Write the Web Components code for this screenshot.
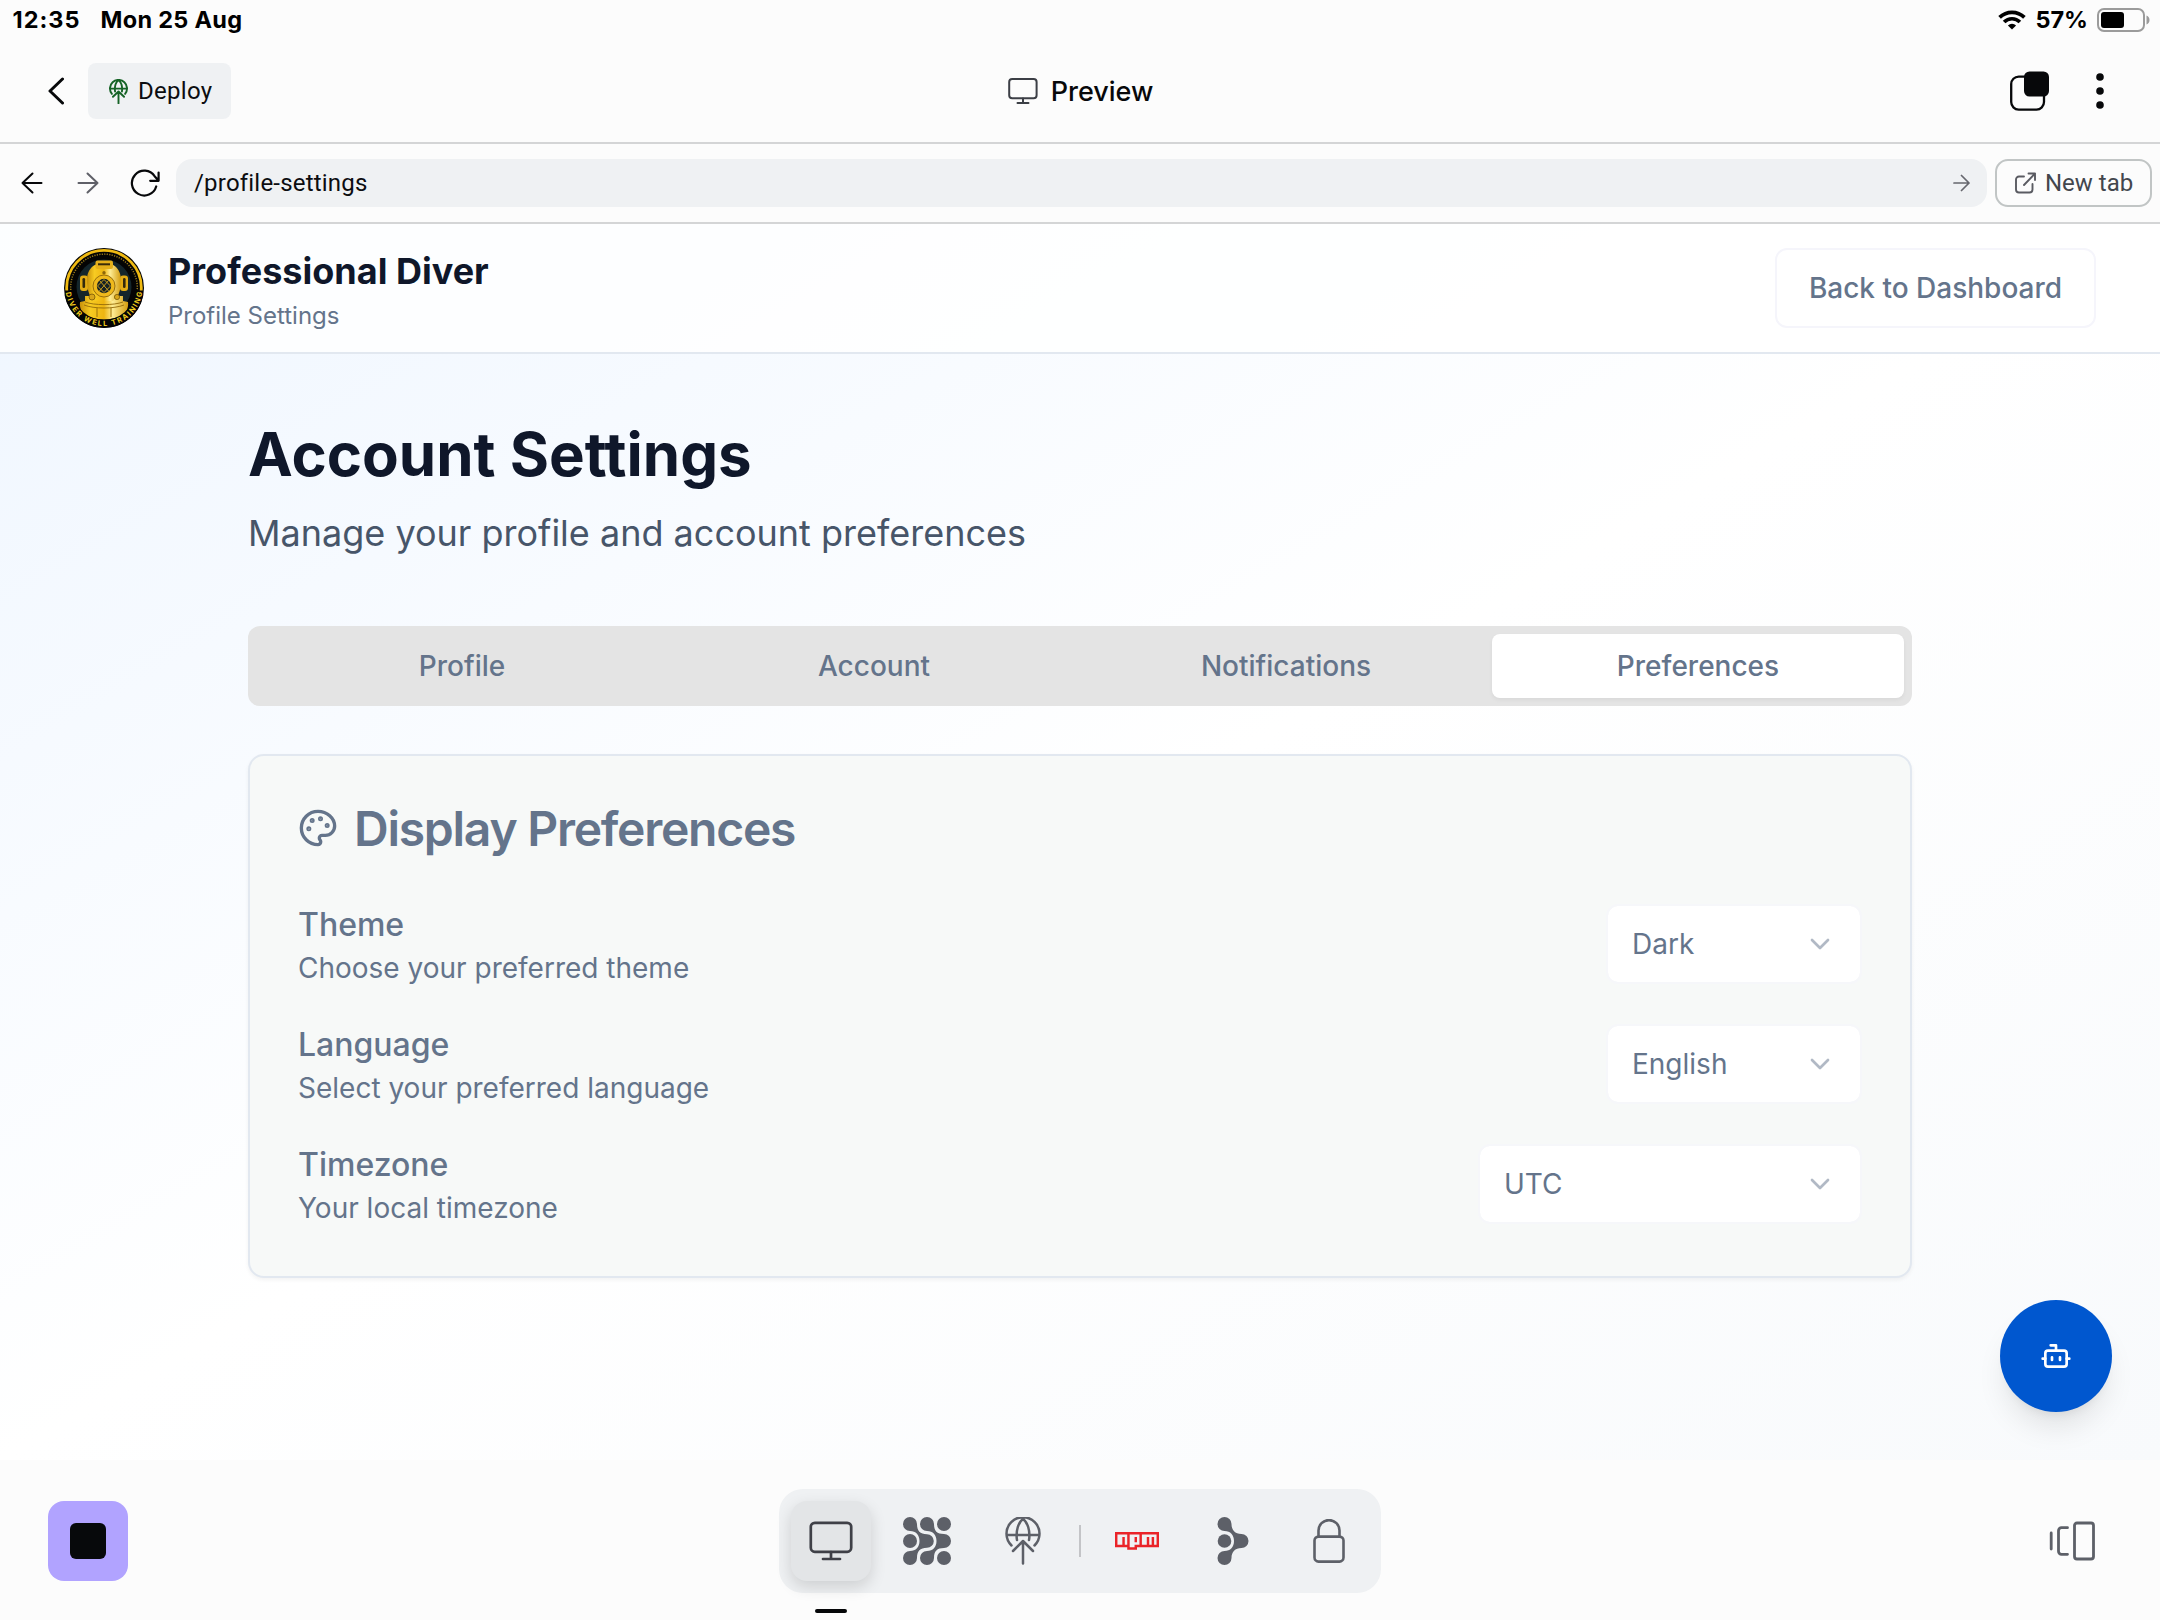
<!DOCTYPE html>
<html lang="en">
<head>
<meta charset="utf-8">
<title>Preview</title>
<style>
html,body{margin:0;height:100%;background:#fcfcfc}
body{font-family:Inter,"Liberation Sans",sans-serif;color:#050608;overflow:hidden}
</style>
</head>
<body>
<preview-shell>
  <status-bar slot="status" time="12:35" date="Mon 25 Aug" battery="57%"></status-bar>
  <workspace-header slot="header" action="Deploy">Preview</workspace-header>
  <browser-bar slot="nav" path="/profile-settings"></browser-bar>
  <profile-app slot="app"></profile-app>
  <tool-dock slot="dock"></tool-dock>
</preview-shell>
<script>
const define = (name, html) => customElements.define(name, class extends HTMLElement {
  constructor() {
    super();
    const t = document.createElement('template');
    t.innerHTML = (typeof html === 'function' ? html(this) : html).replace(/^\s*/, '<style>*{box-sizing:border-box}svg{display:block;flex:none}</style>');
    this.attachShadow({ mode: 'open' }).append(t.content.cloneNode(true));
  }
});
const PLEX = 'Roboto,"Noto Sans",sans-serif';

define('preview-shell', `
<style>:host{display:grid;grid-template-rows:40px 104px 80px 1236px 160px;width:2160px;height:1620px;background:#fcfcfc}</style>
<slot name="status"></slot><slot name="header"></slot><slot name="nav"></slot><slot name="app"></slot><slot name="dock"></slot>`);

define('status-bar', el => `
<style>
:host{display:flex;align-items:center;justify-content:space-between;padding:0 10px 0 12.5px;font-weight:700;font-size:23.5px;line-height:28px;color:#000}
div{display:flex;align-items:center}
.l{gap:20px}.t{letter-spacing:1px}.d{letter-spacing:.3px}
.r{gap:9px}.p{margin-right:-1px}
</style>
<div class="l"><span class="t">${el.getAttribute('time')}</span><span class="d">${el.getAttribute('date')}</span></div>
<div class="r">
<svg width="28" height="20" viewBox="0 0 28 20" fill="none" stroke="#000" stroke-width="3.7"><path d="M1.6 7.4a17.6 17.6 0 0 1 24.8 0"/><path d="M6.1 12a11.2 11.2 0 0 1 15.8 0"/><path d="M14 19.6l-4.1-4.2a5.9 5.9 0 0 1 8.2 0z" fill="#000" stroke="none"/></svg>
<span class="p">${el.getAttribute('battery')}</span>
<svg width="54" height="24" viewBox="0 0 54 24"><rect x="2" y="1" width="46" height="22" rx="6" fill="none" stroke="#9b9b9b" stroke-width="2"/><rect x="5" y="4" width="23" height="16" rx="3" fill="#000"/><path d="M50.500 7.500c4 1.500 4 7.500 0 9z" fill="#9b9b9b"/></svg>
</div>`);

define('workspace-header', el => `
<style>
:host{display:grid;grid-template-columns:1fr auto 1fr;align-items:center;border-bottom:2px solid #d4d5d6;padding:0 48px}
div{display:flex;align-items:center}
.back{margin-right:24px}
.deploy{height:56px;width:143px;padding-left:21px;gap:10px;background:#eff1f3;border-radius:8px;font:400 24px/32px ${PLEX};letter-spacing:.3px;color:#0c0d10}
.title{gap:13px;font-weight:500;font-size:27px;line-height:36px;color:#07080a;padding:1px 0 0 1px}
.title svg{margin-top:-1px}
.r{justify-content:flex-end}
.more{margin-left:47px;margin-right:8px}
</style>
<div>
<svg class="back" width="16" height="28" viewBox="0 0 16 28" fill="none" stroke="#07080a" stroke-width="3" stroke-linecap="round" stroke-linejoin="round"><path d="M14.500 2 2 14l12.500 12"/></svg>
<div class="deploy"><svg width="19" height="25" viewBox="0 0 36 47" fill="none" stroke="#166326" stroke-width="3.600" stroke-linecap="round" stroke-linejoin="round"><path d="M5.500 28A16.200 16.200 0 1 1 30.500 28M2 18h32M11.500 23.500C10 14 13 5 18 2c5 3 8 12 6.500 21.500M18 46V24M7.500 33.500 18 23.500l10.500 10"/></svg><span>${el.getAttribute('action')}</span></div>
</div>
<div class="title"><svg width="30" height="26" viewBox="0 0 30 26" fill="none" stroke="#3c3f46" stroke-width="2" stroke-linecap="round"><rect x="1.200" y="1" width="27.400" height="19.200" rx="3"/><path d="M15 20.500V25M9.500 25h11"/></svg><slot></slot></div>
<div class="r">
<svg width="40" height="40" viewBox="0 0 40 40"><rect x="2.200" y="5.600" width="32.800" height="33" rx="7.500" fill="none" stroke="#07080a" stroke-width="2.300"/><rect x="15" y=".5" width="25" height="25" rx="5.500" fill="#07080a"/></svg>
<svg class="more" width="8" height="36" viewBox="0 0 8 36" fill="#07080a"><circle cx="4" cy="4" r="3.800"/><circle cx="4" cy="18" r="3.800"/><circle cx="4" cy="32" r="3.800"/></svg>
</div>`);

define('browser-bar', el => `
<style>
:host{display:flex;align-items:center;border-bottom:2px solid #d4d5d6;padding:0 8px 0 21px;font:400 24px/32px ${PLEX}}
.f{margin-left:34px}.re{margin-left:31px;margin-right:16px}
.url{flex:1;height:48px;background:#eff1f3;border-radius:16px;display:flex;align-items:center;justify-content:space-between;padding:0 17px 0 18px;color:#0c0d10;margin-right:8px;letter-spacing:.2px}
.new{height:48px;width:157px;border:2px solid #c1c5c5;border-radius:13px;display:flex;align-items:center;padding-left:18px;gap:9px;color:#43464d;white-space:nowrap}
</style>
<svg width="22" height="22" viewBox="0 0 22 22" fill="none" stroke="#07080a" stroke-width="2" stroke-linecap="round" stroke-linejoin="round"><path d="M20.500 11H1.500M11.500 1.500 1.500 11l10 9.500"/></svg>
<svg class="f" width="22" height="22" viewBox="0 0 22 22" fill="none" stroke="#5f6068" stroke-width="2" stroke-linecap="round" stroke-linejoin="round"><path d="M1.500 11h19M10.500 1.500l10 9.500-10 9.500"/></svg>
<svg class="re" width="30" height="28" viewBox="0 0 30 28" fill="none" stroke="#07080a" stroke-width="2.200" stroke-linecap="round" stroke-linejoin="round"><path d="M26.200 17.500A12.400 12.400 0 1 1 24.600 7.200L28 11M28.600 3.500v8.300h-8.400"/></svg>
<div class="url"><span>${el.getAttribute('path')}</span><svg width="17" height="18" viewBox="0 0 17 18" fill="none" stroke="#66676e" stroke-width="1.700" stroke-linecap="round" stroke-linejoin="round"><path d="M1 9h15M8.500 1.500 16 9l-7.500 7.500"/></svg></div>
<div class="new"><svg width="21" height="22" viewBox="0 0 21 22" fill="none" stroke="#5a5b62" stroke-width="1.900" stroke-linecap="round" stroke-linejoin="round"><path d="M9 4.500H4a3 3 0 0 0-3 3V17.500a3 3 0 0 0 3 3h10.500a3 3 0 0 0 3-3V12M13.500 1.500h6.500V8M20 1.500 9 13"/></svg><span>New tab</span></div>`);

define('brand-logo', `
<style>:host{display:block;width:80px;height:80px}</style>
<svg width="80" height="80" viewBox="0 0 80 80">
<defs><linearGradient id="g" x1="0" x2="1"><stop offset="0" stop-color="#c8910b"/><stop offset=".22" stop-color="#f7cb22"/><stop offset=".5" stop-color="#eeb511"/><stop offset=".68" stop-color="#fdec94"/><stop offset="1" stop-color="#d49c0d"/></linearGradient></defs>
<circle cx="40" cy="40" r="40" fill="#040404"/>
<path d="M2.800 42.500A37.300 37.300 0 1 1 77.200 42.500" fill="none" stroke="#f0ba12" stroke-width="2.800"/>
<path d="M6.800 42A33.300 33.300 0 1 1 73.200 42" fill="none" stroke="#9b7a1a" stroke-width="1.500" stroke-dasharray="1.200 1.300"/>
<circle cx="40" cy="39" r="27.500" fill="#14252b"/>
<rect x="16" y="27.500" width="8" height="15.500" rx="3" fill="#e3ab14"/><rect x="56" y="27.500" width="8" height="15.500" rx="3" fill="#e3ab14"/>
<rect x="18.500" y="30" width="2.600" height="10" rx="1.300" fill="#33290c"/><rect x="59" y="30" width="2.600" height="10" rx="1.300" fill="#33290c"/>
<path d="M23.500 38C21 23 28 15 40 15s19 8 16.500 23c-.5 7-3.500 12-6.500 15H30c-3-3-6-8-6.500-15z" fill="url(#g)"/>
<rect x="31.500" y="12.500" width="17.500" height="8.500" rx="2" fill="#e5b01a"/><path d="M34 16.300h12" stroke="#3a2c08" stroke-width="2"/>
<path d="M21 48h6l4 5h18l4-5h6v5l5 1c1 7-3 12-7 14-10 4.500-24 4.500-34 0-4-2-8-7-7-14l5-1z" fill="url(#g)"/>
<path d="M21 54c9 3.500 29 3.500 38 0M20 57c10 4 30 4 40 0M33 60v9M47 60v9" fill="none" stroke="#946b0a" stroke-width=".9"/>
<circle cx="40" cy="38" r="11" fill="#efb91c" stroke="#8d670b" stroke-width=".9"/><circle cx="40" cy="38" r="7.200" fill="#142125"/>
<path d="M35.500 32.500l9.500 11M44.500 32.500l-9.500 11M40 31.500l6.500 6.500-6.500 6.500-6.500-6.500z" fill="none" stroke="#d9a81e" stroke-width=".9"/>
<circle cx="40" cy="24.800" r="1.700" fill="#8d670b"/><circle cx="28" cy="49" r="3" fill="#d8a51a" stroke="#7a5908" stroke-width=".8"/><circle cx="53" cy="49" r="2.600" fill="#d8a51a" stroke="#7a5908" stroke-width=".8"/>
<path d="M4.700 46A35.800 35.800 0 0 0 75.300 46" fill="none" stroke="#040404" stroke-width="8"/>
<path id="arc" d="M1.800 43.500A38.400 38.400 0 0 0 78.200 43.500" fill="none"/>
<text font-family="Inter,sans-serif" font-weight="700" font-size="7.200" fill="#f5cf1c"><textPath href="#arc" startOffset="1" textLength="111">DIVER WELL TRAINING</textPath></text>
</svg>`);

define('app-header', `
<style>
:host{display:flex;align-items:center;height:130px;border-bottom:2px solid #e2e8f0;background:rgba(255,255,255,.82);padding:0 64px}
.t{margin-left:24px;flex:1;padding-top:8px}
h1{margin:-1px 0 1px;font-weight:700;font-size:36px;line-height:48px;color:#0f172a}
p{margin:0;font-size:24px;line-height:40px;color:#64748b}
.b{height:80px;width:321px;border:2px solid #f5f5fb;border-radius:12px;background:#fff;display:grid;place-items:center;font-weight:500;font-size:28px;color:#64748b}
</style>
<brand-logo></brand-logo>
<div class="t"><h1>Professional Diver</h1><p>Profile Settings</p></div>
<div class="b"><span>Back to Dashboard</span></div>`);

define('tab-item', `
<style>:host{display:grid;place-items:center;flex:1;height:64px;border-radius:8px;font-weight:500;font-size:28px;line-height:40px;color:#64748b}
:host([active]){background:#fff;box-shadow:0 2px 4px rgba(0,0,0,.05)}</style><slot></slot>`);

define('select-box', `
<style>:host{display:flex;align-items:center;justify-content:space-between;width:256px;height:80px;padding:0 24px;border:2px solid #f6f7fa;border-radius:12px;background:#fff;background-clip:padding-box;font-size:28px;line-height:40px;color:#64748b}
:host([wide]){width:384px}</style><span><slot></slot></span>
<svg width="32" height="32" viewBox="0 0 24 24" fill="none" stroke="#64748b" stroke-opacity=".5" stroke-width="2" stroke-linecap="round" stroke-linejoin="round"><path d="m6 9 6 6 6-6"/></svg>`);

define('pref-row', el => `
<style>:host{display:flex;align-items:center;justify-content:space-between;height:88px;color:#64748b}
.l{font-weight:500;font-size:32px;line-height:48px;padding-top:1px;height:48px}.d{font-size:28px;line-height:40px}</style>
<div><div class="l">${el.getAttribute('label')}</div><div class="d">${el.getAttribute('hint')}</div></div><slot></slot>`);

define('profile-app', `
<style>
:host{display:block;height:1236px;overflow:hidden;position:relative;background:linear-gradient(to bottom right,#eff6ff,#ffffff 50%,#f8fafc)}
main{width:1664px;margin:0 auto;padding-top:64px}
h2{margin:0;font-weight:700;font-size:60px;line-height:72px;color:#0f172a}
.sub{margin:15px 0 65px;font-size:36px;line-height:56px;color:#475569}
.tabs{display:flex;height:80px;padding:8px;background:#e4e4e4;border-radius:12px}
.card{margin-top:48px;height:524px;border:2px solid #e2e8f0;border-radius:16px;background:#f7f9f8;padding:48px;box-shadow:0 2px 4px rgba(0,0,0,.05);display:flex;flex-direction:column;gap:32px}
.h{display:flex;align-items:center;gap:16px;font-weight:600;font-size:48px;line-height:48px;letter-spacing:-1.25px;color:#64748b;margin-bottom:16px}
.h span{padding-top:1px;height:48px}
.fab{position:absolute;right:48px;bottom:48px;width:112px;height:112px;border-radius:50%;background:#0057cf;display:grid;place-items:center;box-shadow:0 20px 30px -6px rgba(0,0,0,.1),0 8px 12px -8px rgba(0,0,0,.1)}
</style>
<app-header></app-header>
<main>
<h2>Account Settings</h2><div class="sub">Manage your profile and account preferences</div>
<div class="tabs"><tab-item>Profile</tab-item><tab-item>Account</tab-item><tab-item>Notifications</tab-item><tab-item active>Preferences</tab-item></div>
<section class="card">
<div class="h"><svg width="40" height="40" viewBox="0 0 24 24" fill="none" stroke="#64748b" stroke-width="2" stroke-linecap="round" stroke-linejoin="round"><circle cx="13.500" cy="6.500" r=".5" fill="#64748b"/><circle cx="17.500" cy="10.500" r=".5" fill="#64748b"/><circle cx="8.500" cy="7.500" r=".5" fill="#64748b"/><circle cx="6.500" cy="12.500" r=".5" fill="#64748b"/><path d="M12 2C6.500 2 2 6.500 2 12s4.500 10 10 10c.926 0 1.648-.746 1.648-1.688 0-.437-.18-.835-.437-1.125-.29-.289-.438-.652-.438-1.125a1.640 1.640 0 0 1 1.668-1.668h1.996c3.051 0 5.555-2.503 5.555-5.554C21.965 6.012 17.461 2 12 2z"/></svg><span>Display Preferences</span></div>
<pref-row label="Theme" hint="Choose your preferred theme"><select-box>Dark</select-box></pref-row>
<pref-row label="Language" hint="Select your preferred language"><select-box>English</select-box></pref-row>
<pref-row label="Timezone" hint="Your local timezone"><select-box wide>UTC</select-box></pref-row>
</section>
</main>
<div class="fab"><svg width="32" height="32" viewBox="0 0 24 24" fill="none" stroke="#fff" stroke-width="2" stroke-linecap="round" stroke-linejoin="round"><path d="M12 8V4H8"/><rect width="16" height="12" x="4" y="8" rx="2"/><path d="M2 14h2M20 14h2M15 13v2M9 13v2"/></svg></div>`);

define('dock-item', `
<style>:host{display:grid;place-items:center;width:80px;height:80px;border-radius:16px;position:relative}
:host([active]){background:#e3e5e7;box-shadow:0 6px 16px rgba(0,0,0,.14)}
:host([active])::after{content:"";position:absolute;left:24px;top:108px;width:32px;height:4px;border-radius:2px;background:#050608}</style><slot></slot>`);

define('tool-dock', `
<style>
:host{display:grid;grid-template-columns:731px auto 1fr;padding:0 64px 0 48px;align-items:center;height:160px;background:#fcfcfc}
.stop{width:80px;height:80px;border-radius:16px;background:#b1a3ff;display:grid;place-items:center;margin-top:2px}
.stop i{width:36px;height:36px;border-radius:6px;background:#07090b}
.dock{display:flex;align-items:center;gap:16px;height:104px;padding:12px;background:#eff1f3;border-radius:24px;margin-top:2px}
.sep{width:2px;height:32px;background:#c3c4c7}
.r{display:flex;justify-content:flex-end;margin-top:2px}
</style>
<div class="stop"><i></i></div>
<div class="dock">
<dock-item active><svg width="44" height="40" viewBox="0 0 44 40" fill="none" stroke="#3f4047" stroke-width="2.700" stroke-linecap="round"><rect x="1.800" y="1.800" width="40.400" height="29" rx="4"/><path d="M22 31v7M14 38h17"/></svg></dock-item>
<dock-item><svg width="48" height="48" viewBox="0 0 48 48" fill="#5d6068">
<circle cx="7" cy="24" r="7"/><circle cx="41" cy="7" r="7"/><circle cx="41" cy="41" r="7"/>
<path d="M7 0a7 7 0 0 1 7 7C14 14 17 17 24 17.200a6.800 6.800 0 0 1 0 13.600C17 31 14 34 14 41a7 7 0 1 1-7-7c6 0 9.500-4 9.500-10S13 14 7 14A7 7 0 0 1 7 0z"/>
<path d="M24 0a7 7 0 0 1 7 7C31 14 34 17 41 17a7 7 0 0 1 0 14C34 31 31 34 31 41a7 7 0 1 1-7-7c6 0 9.500-4 9.500-10S30 14 24 14A7 7 0 0 1 24 0z"/></svg></dock-item>
<dock-item><svg width="36" height="48" viewBox="0 0 36 48" fill="none" stroke="#5d6068" stroke-width="2.500" stroke-linecap="round" stroke-linejoin="round"><path d="M6.500 28.500A16.500 16.500 0 1 1 29.500 28.500M1.500 18h33M12 23C10.500 14 13.500 5 18 2c4.500 3 7.500 12 6 21M18 46.500V24.500M8 34 18 24l10 10"/></svg></dock-item>
<div class="sep"></div>
<dock-item><svg width="44" height="18" viewBox="0 0 18 7.100" preserveAspectRatio="none"><path fill="#ea2328" fill-rule="evenodd" d="M0 0h18v6H9v1H5V6H0V0zM1 5h2V2h1v3h1V1H1v4zM6 1v5h2V5h2V1H6zM8 2h1v2H8V2zM11 1v4h2V2h1v3h1V2h1v3h1V1H11z"/></svg></dock-item>
<dock-item><svg width="32" height="48" viewBox="0 0 32 48" fill="#5d6068"><circle cx="7.500" cy="24" r="6.800"/><path d="M7.500 0a7 7 0 0 1 7 7C14.500 13 18 17 24.500 17a7 7 0 0 1 0 14C18 31 14.500 35 14.500 41a7 7 0 1 1-7-7c6 0 9.500-4 9.500-10S13.500 14 7.500 14a7 7 0 0 1 0-14z"/></svg></dock-item>
<dock-item><svg width="32" height="44" viewBox="0 0 32 44" fill="none" stroke="#5d6068" stroke-width="2.600"><rect x="1.500" y="17.600" width="29" height="25" rx="4"/><path d="M5.500 17.600v-6a10.500 10.500 0 0 1 21 0v6"/></svg></dock-item>
</div>
<div class="r"><svg width="47" height="40" viewBox="0 0 47 40" fill="none" stroke="#5d6068" stroke-width="2.800" stroke-linecap="round" stroke-linejoin="round"><path d="M2.200 12v16M18.500 6.700h-6a3 3 0 0 0-3 3v20.600a3 3 0 0 0 3 3h6"/><rect x="25.500" y="2" width="19" height="36" rx="2.500"/></svg></div>`);
</script>
</body>
</html>
